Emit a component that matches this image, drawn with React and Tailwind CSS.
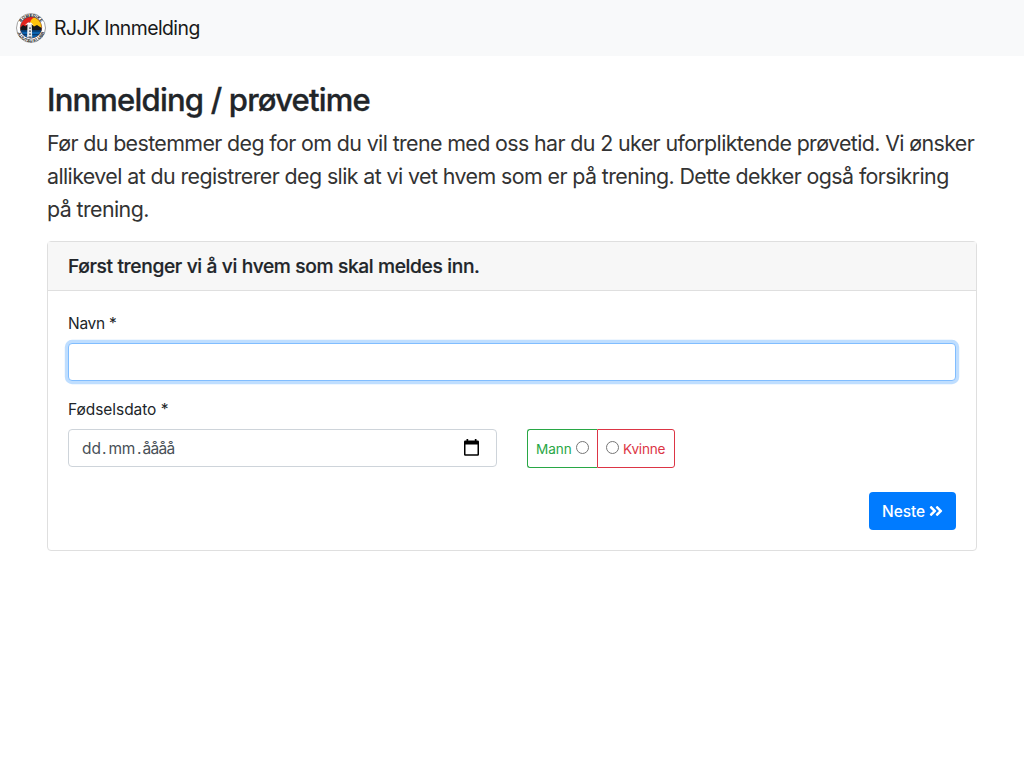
import React from "react";
import { FaAngleDoubleRight } from "react-icons/fa";

function Logo() {
  return (
    <svg className="h-[30px] w-[30px] shrink-0" viewBox="0 0 60 60" role="img">
      <defs>
        <clipPath id="disc"><circle cx="30" cy="29" r="21.5" /></clipPath>
        <path id="topArc" d="M8 30a22 22 0 0 1 44 0" />
        <path id="bottomArc" d="M1.5 30a28.5 28.5 0 0 0 57 0" />
      </defs>
      <circle cx="30" cy="30" r="29" fill="#fff" stroke="#8a8a8a" strokeWidth="1.6" />
      <g clipPath="url(#disc)">
        <rect width="60" height="60" fill="#e3221c" />
        <circle cx="41" cy="21" r="13" fill="#ffc40c" />
        <path d="M6 32l8-8 5 3 8-9 9 9 6-3 12 8v6H6z" fill="#15171c" />
        <path d="M18 24l6-5 6 0 5 5-4-1-4 2-4-2z" fill="#fff" />
        <rect y="35" width="60" height="28" fill="#0b62ad" />
        <path d="M6 36h48M6 43h48" stroke="#073a70" strokeWidth="2.5" />
        <path d="M23 23h8.500l1 29H22z" fill="#e8ebee" />
        <path d="M26 30h4M26 36h4M26 42h4M25 48h6" stroke="#4c5762" strokeWidth="2.500" />
      </g>
      <circle cx="30" cy="29" r="21.5" fill="none" stroke="#444" strokeWidth="0.8" />
      <text fontFamily="Liberation Sans" fontWeight="700" fontSize="8.5" fill="#111" textAnchor="middle">
        <textPath href="#topArc" startOffset="50%">ROMERIKE</textPath>
      </text>
      <text fontFamily="Liberation Sans" fontWeight="700" fontSize="8.5" fill="#111" textAnchor="middle">
        <textPath href="#bottomArc" startOffset="50%">JUJUTSU KLUBB</textPath>
      </text>
    </svg>
  );
}

function CalendarIcon() {
  return (
    <svg className="h-[17px] w-[15px]" viewBox="0 0 15 17" fill="none">
      <path d="M2.5 0h1.7v2H2.5zM10.8 0h1.7v2h-1.7z" fill="#000" />
      <path d="M1.3 1.5h12.4A1.3 1.3 0 0 1 15 2.8v12.7a1.3 1.3 0 0 1-1.3 1.3H1.3A1.3 1.3 0 0 1 0 15.5V2.8a1.3 1.3 0 0 1 1.3-1.3zM1.5 5.4v9.9h12V5.4z" fill="#000" fillRule="evenodd" />
    </svg>
  );
}

const radio = "m-0 h-[13px] w-[13px] shrink-0 -mt-0.5";

export default function App() {
  return (
    <div className="min-h-screen bg-white font-['Inter',sans-serif] text-[#212529]">
      <nav className="flex h-14 items-center gap-2 bg-[#f8f9fa] px-4">
        <Logo />
        <span className="text-[19.4px] leading-[30px] tracking-[-0.56px] text-[#191919]">RJJK Innmelding</span>
      </nav>
      <main className="px-[47px] pt-[25px]">
        <h1 className="mb-2 text-[31px] leading-[38.4px] font-medium tracking-[-0.79px] [-webkit-text-stroke:0.35px_#212529]">Innmelding / prøvetime</h1>
        <p className="mb-[15px] text-[21.4px] leading-[33px] whitespace-nowrap text-[#333]">
          <span className="tracking-[-0.616px]">Før du bestemmer deg for om du vil trene med oss har du 2 uker uforpliktende prøvetid. Vi ønsker</span>
          <br />
          <span className="tracking-[-0.59px]">allikevel at du registrerer deg slik at vi vet hvem som er på trening. Dette dekker også forsikring</span>
          <br />
          <span className="tracking-[-0.59px]">på trening.</span>
        </p>
        <section className="rounded border border-[#dfdfdf] bg-white">
          <header className="border-b border-[#dfdfdf] bg-[#f7f7f7] px-5 py-3">
            <h2 className="text-[19.2px] leading-6 font-medium tracking-[-0.36px] [-webkit-text-stroke:0.2px_#212529]">Først trenger vi å vi hvem som skal meldes inn.</h2>
          </header>
          <form className="px-5 pt-[21px] pb-5" onSubmit={(e) => e.preventDefault()}>
            <label htmlFor="name" className="mb-[7px] block text-[15.5px] leading-6 tracking-[-0.3px]">Navn *</label>
            <input id="name" className="mb-[17px] block h-[38px] w-full rounded border border-[#80bdff] bg-white px-3 shadow-[0_0_0_3.2px_#bfdeff] outline-none" />
            <div className="flex items-end gap-[30px]">
              <div className="w-[429px]">
                <span className="mb-[7px] block text-[15.5px] leading-6 tracking-[-0.05px]">Fødselsdato *</span>
                <div className="flex h-[38px] items-center justify-between rounded border border-[#ced4da] pr-[17px] pl-3 text-[15.5px] text-[#495057]">
                  <div className="flex pt-0.5 leading-6">
                    <span className="px-px">dd</span>
                    <span className="pr-px">.</span>
                    <span className="px-px tracking-[-0.3px]">mm</span>
                    <span className="px-px">.</span>
                    <span className="tracking-[-0.7px]">åååå</span>
                  </div>
                  <span className="-mt-0.5"><CalendarIcon /></span>
                </div>
              </div>
              <div className="-mb-px flex h-[39px] text-[13.6px] leading-[21px]">
                <label className="flex w-[70px] items-center gap-1 rounded-l-[3px] border border-r-0 border-[#28a745] pl-2 tracking-[-0.1px] text-[#28a745]">
                  <span className="pt-px">Mann</span>
                  <input type="radio" name="gender" className={radio} />
                </label>
                <label className="flex w-[78px] items-center gap-1 rounded-r-[3px] border border-[#dc3545] pl-2 tracking-[-0.2px] text-[#dc3545]">
                  <input type="radio" name="gender" className={radio} />
                  <span className="pt-px">Kvinne</span>
                </label>
              </div>
            </div>
            <div className="mt-[25px] flex justify-end">
              <button className="flex h-[38px] w-[87px] items-center rounded bg-[#007bff] pl-[13px] text-[15.5px] leading-6 text-white">
                <span className="mr-[3px] pt-0.5 font-medium tracking-[-0.05px]">Neste</span>
                <FaAngleDoubleRight className="h-4 w-4" />
              </button>
            </div>
          </form>
        </section>
      </main>
    </div>
  );
}
